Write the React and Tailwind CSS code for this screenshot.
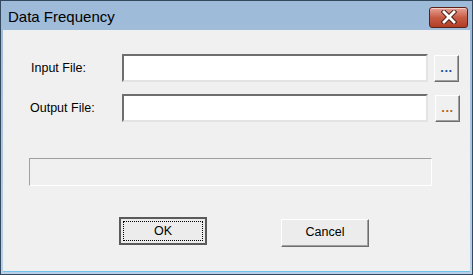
export default function App() {
    return (
        <div className="w-[473px] h-[275px] overflow-hidden border border-[#34495e] bg-gradient-to-b from-[#9dbad8] to-[#b8d0ea] flex flex-col" style={{ fontFamily: '"Liberation Sans", Arial, sans-serif' }}>
            {/* Title bar */}
            <div className="h-[29px] flex items-center justify-between pl-[7px] pr-[4px] shrink-0">
                <span className="text-[15px] text-black leading-none pt-[2px]">Data Frequency</span>
                <div className="w-[39px] h-[21px] mt-[3px] rounded-[3px] border border-[#5e2118] bg-gradient-to-b from-[#e6a396] via-[#c85b45] to-[#b13d25] flex items-center justify-center shadow-[inset_0_1px_0_rgba(255,255,255,0.5)]">
                    <svg width="16" height="14" viewBox="0 0 16 14">
                        <path d="M3 2 L13 12 M13 2 L3 12" stroke="#4a1a12" strokeWidth="4.6" strokeLinecap="square" />
                        <path d="M3 2 L13 12 M13 2 L3 12" stroke="#ffffff" strokeWidth="2.8" strokeLinecap="square" />
                    </svg>
                </div>
            </div>

            {/* Client area */}
            <div className="flex-1 mx-[2px] mb-[2px] bg-[#f0f0f0] border-b border-[#6fc3ea] flex flex-col text-[12.5px] text-black">
                <div className="flex items-center pl-[27px] pt-[24px]">
                    <span className="w-[92px] pl-[1px]">Input File:</span>
                    <div className="w-[306px] h-[28px] bg-white border-t-2 border-l-2 border-t-[#6e6e6e] border-l-[#6e6e6e] border-b-2 border-r-2 border-b-[#e3e3e3] border-r-[#e3e3e3]"></div>
                    <div className="ml-[6px] w-[25px] h-[27px] bg-[#f0f0f0] border border-t-white border-l-white border-b-[#6e6e6e] border-r-[#6e6e6e] shadow-[inset_-1px_-1px_0_#a0a0a0] flex items-center justify-center">
                        <span className="text-[13px] font-bold leading-none text-[#1f4f9a] tracking-[0.5px] pb-[1px]">...</span>
                    </div>
                </div>
                <div className="flex items-center pl-[26px] pt-[12px]">
                    <span className="w-[93px] pl-[1px]">Output File:</span>
                    <div className="w-[306px] h-[28px] bg-white border-t-2 border-l-2 border-t-[#6e6e6e] border-l-[#6e6e6e] border-b-2 border-r-2 border-b-[#e3e3e3] border-r-[#e3e3e3]"></div>
                    <div className="ml-[7px] w-[25px] h-[27px] bg-[#f0f0f0] border border-t-white border-l-white border-b-[#6e6e6e] border-r-[#6e6e6e] shadow-[inset_-1px_-1px_0_#a0a0a0] flex items-center justify-center">
                        <span className="text-[13px] font-bold leading-none text-[#b4661e] tracking-[0.5px] pb-[1px]">...</span>
                    </div>
                </div>

                {/* Progress area */}
                <div className="ml-[26px] mt-[36px] w-[403px] h-[28px] border border-t-[#a0a0a0] border-l-[#a0a0a0] border-b-white border-r-white"></div>

                {/* Buttons */}
                <div className="flex items-start mt-[31px]">
                    <div className="ml-[116px] w-[88px] h-[28px] border-2 border-[#5a5a5a] bg-[#ececec] p-[2px]">
                        <div className="w-full h-full border border-dotted border-black flex items-center justify-center">OK</div>
                    </div>
                    <div className="ml-[74px] mt-[2px] w-[88px] h-[28px] bg-[#ececec] border border-t-white border-l-white border-b-[#6e6e6e] border-r-[#6e6e6e] shadow-[inset_-1px_-1px_0_#a0a0a0] flex items-center justify-center pb-[1px]">Cancel</div>
                </div>
            </div>
        </div>
    );
}
